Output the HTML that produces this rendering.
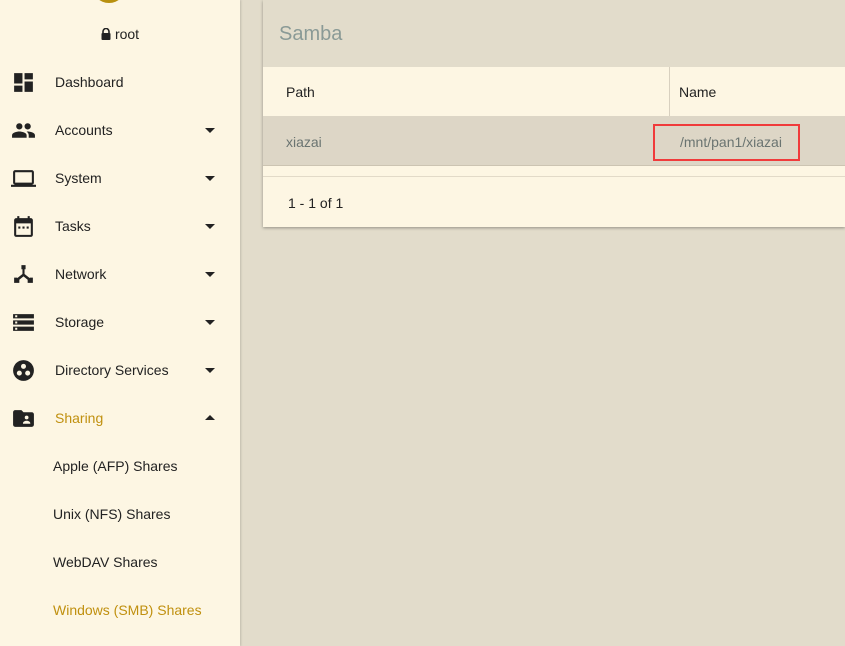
<!DOCTYPE html>
<html><head><meta charset="utf-8"><style>
*{margin:0;padding:0;box-sizing:border-box}
body{width:845px;height:646px;overflow:hidden;background:#e2dccb;font-family:"Liberation Sans",sans-serif;position:relative}
#side{position:absolute;left:0;top:0;width:240px;height:646px;background:#fdf6e3;box-shadow:1px 0 2px rgba(0,0,0,.15)}
.logo{position:absolute;left:92px;top:-31px;width:34px;height:34px;border-radius:50%;background:#b8900f}
.user{position:absolute;top:26px;left:0;width:240px;text-align:center;font-size:14px;color:#222}
.item{position:absolute;left:0;width:240px;height:48px;font-size:14px;color:#222}
.item svg.ic{position:absolute;left:11px;top:12px;width:25px;height:25px}
.item span{position:absolute;left:55px;top:16px}
.item .ar{position:absolute;left:205px;top:22px;width:0;height:0;border-left:5px solid transparent;border-right:5px solid transparent;border-top:5px solid #222}
.item .up{border-top:0;border-bottom:5px solid #222;top:21px}
.sub{position:absolute;left:53px;font-size:14px;color:#222}
#card{position:absolute;left:263px;top:0;width:582px;height:227px;background:#fdf6e3;box-shadow:0 1px 3px rgba(0,0,0,.35)}
.hd{height:67px;background:#e2dccb;font-size:20px;color:#8a9a96;padding:23px 0 0 16px}
.th{height:49px;position:relative;font-size:14px;color:#222}
.th span{position:absolute;top:17px}
.row{height:50px;background:#ddd6c6;position:relative;font-size:14px;color:#6a7471;border-bottom:1px solid #ccc4b2}
.row span{position:absolute;top:18px}
</style></head><body>
<div id="side">
<div class="logo"></div>
<div class="user"><svg width="10" height="12" viewBox="0 0 10 12" style="vertical-align:-1px;margin-right:4px"><path d="M2 5V3.5a3 3 0 0 1 6 0V5" stroke="#222" stroke-width="1.6" fill="none"/><rect x="0.5" y="5" width="9" height="7" rx="1" fill="#222"/></svg>root</div>

<div class="item" style="top:58px"><svg class="ic" viewBox="0 0 24 24"><path fill="#222" d="M3 13h8V3H3zm0 8h8v-6H3zm10 0h8V11h-8zm0-18v6h8V3z"/></svg><span>Dashboard</span></div>
<div class="item" style="top:106px"><svg class="ic" viewBox="0 0 24 24"><path fill="#222" d="M16 11c1.66 0 2.99-1.34 2.99-3S17.66 5 16 5s-3 1.34-3 3 1.34 3 3 3zm-8 0c1.66 0 2.99-1.34 2.99-3S9.660 5 8 5 5 6.34 5 8s1.34 3 3 3zm0 2c-2.330 0-7 1.17-7 3.5V19h14v-2.5C15 14.17 10.33 13 8 13zm8 0c-.29 0-.62.02-.97.05 1.16.84 1.97 1.97 1.97 3.45V19h6v-2.5c0-2.33-4.67-3.5-7-3.5z"/></svg><span>Accounts</span><i class="ar"></i></div>
<div class="item" style="top:154px"><svg class="ic" viewBox="0 0 24 24"><path fill="#222" d="M20 18c1.1 0 2-.9 2-2V6c0-1.1-.9-2-2-2H4c-1.1 0-2 .9-2 2v10c0 1.1.9 2 2 2H0v2h24v-2h-4zM4 6h16v10H4z"/></svg><span>System</span><i class="ar"></i></div>
<div class="item" style="top:202px"><svg class="ic" viewBox="0 0 24 24"><path fill="#222" d="M19 4h-1V2h-2v2H8V2H6v2H5c-1.1 0-2 .9-2 2v14c0 1.1.9 2 2 2h14c1.1 0 2-.9 2-2V6c0-1.1-.9-2-2-2zm0 16H5V9h14zM7 12h2v2H7zm4 0h2v2h-2zm4 0h2v2h-2z"/></svg><span>Tasks</span><i class="ar"></i></div>
<div class="item" style="top:250px"><svg class="ic" viewBox="0 0 24 24"><path fill="#222" d="M10 3h4v4h-1v4.5l5 4V15h3v5h-5v-3l-4-3.2L8 17v3H3v-5h3v.5l5-4V7h-1z"/></svg><span>Network</span><i class="ar"></i></div>
<div class="item" style="top:298px"><svg class="ic" viewBox="0 0 24 24"><path fill="#222" d="M2 20h20v-4H2zm2-3h2v2H4zM2 4v4h20V4zm4 3H4V5h2zm-4 7h20v-4H2zm2-3h2v2H4z"/></svg><span>Storage</span><i class="ar"></i></div>
<div class="item" style="top:346px"><svg class="ic" viewBox="0 0 24 24"><circle cx="12" cy="12" r="10" fill="#222"/><circle cx="12" cy="8" r="2.4" fill="#fdf6e3"/><circle cx="8" cy="14.5" r="2.4" fill="#fdf6e3"/><circle cx="16" cy="14.5" r="2.4" fill="#fdf6e3"/></svg><span>Directory Services</span><i class="ar"></i></div>
<div class="item" style="top:394px"><svg class="ic" viewBox="0 0 24 24"><path fill="#222" d="M20 6h-8l-2-2H4c-1.1 0-2 .9-2 2v12c0 1.1.9 2 2 2h16c1.1 0 2-.9 2-2V8c0-1.1-.9-2-2-2z"/><circle cx="15" cy="11" r="1.8" fill="#fdf6e3"/><path fill="#fdf6e3" d="M11.5 16.5c0-1.5 2-2.3 3.5-2.3s3.5.8 3.5 2.3v.5h-7z"/></svg><span style="color:#c0900f">Sharing</span><i class="ar up"></i></div>

<div class="sub" style="top:458px">Apple (AFP) Shares</div>
<div class="sub" style="top:506px">Unix (NFS) Shares</div>
<div class="sub" style="top:554px">WebDAV Shares</div>
<div class="sub" style="top:602px;color:#c0900f">Windows (SMB) Shares</div>
</div>

<div id="card">
<div class="hd">Samba</div>
<div class="th"><span style="left:23px">Path</span><div style="position:absolute;left:406px;top:0;width:1px;height:49px;background:#d8d0bf"></div><span style="left:416px">Name</span></div>
<div class="row"><span style="left:23px">xiazai</span><span style="left:417px">/mnt/pan1/xiazai</span>
<div style="position:absolute;left:390px;top:8px;width:147px;height:37px;border:2px solid #f03b3b"></div></div>
<div style="height:10px"></div>
<div style="border-top:1px solid #e2dac8;height:50px;position:relative;font-size:14px;color:#222"><span style="position:absolute;left:25px;top:18px">1 - 1 of 1</span></div>
</div>
</body></html>
